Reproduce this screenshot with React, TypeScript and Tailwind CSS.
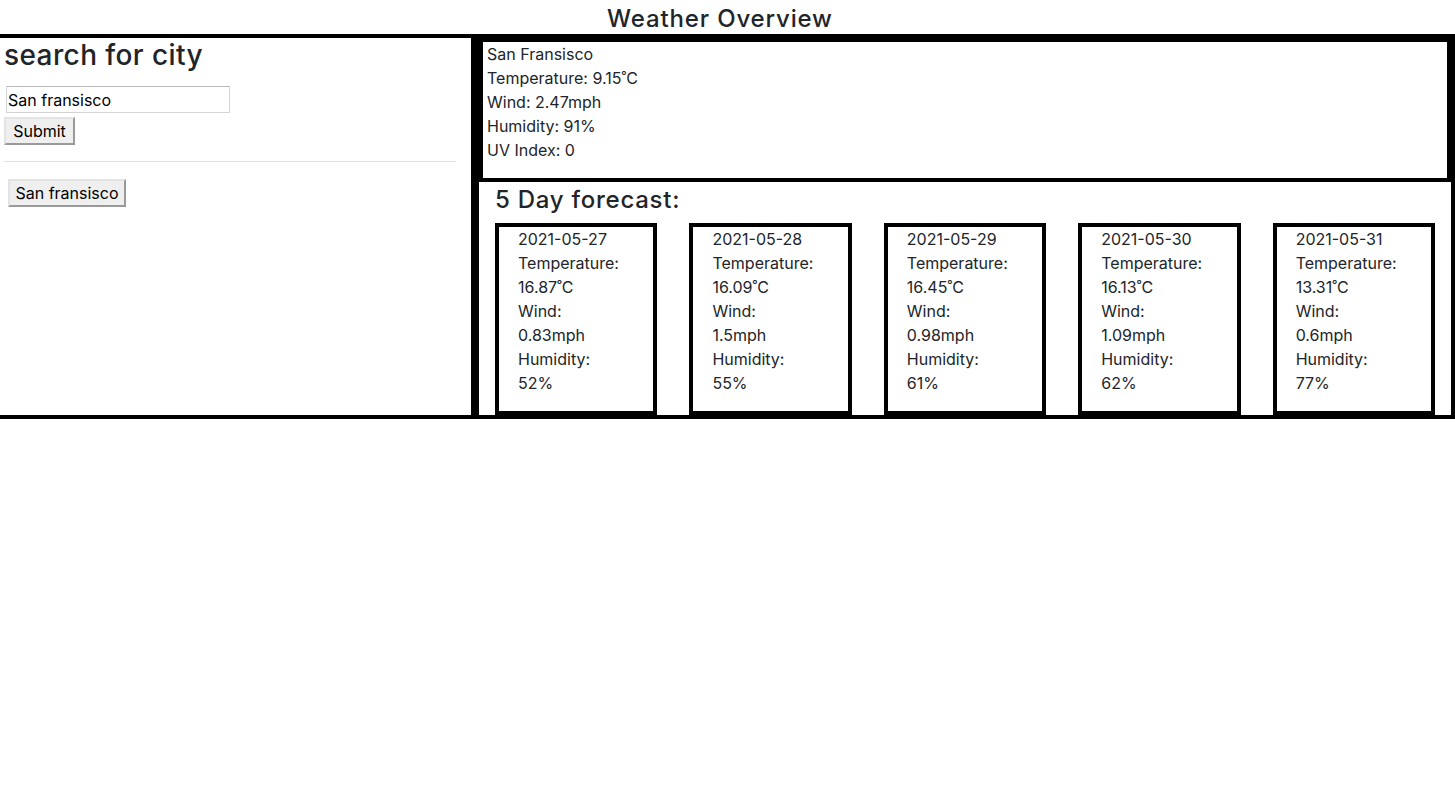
import React from "react";

const days = [
  { date: "2021-05-27", temp: "16.87", wind: "0.83", hum: "52" },
  { date: "2021-05-28", temp: "16.09", wind: "1.5", hum: "55" },
  { date: "2021-05-29", temp: "16.45", wind: "0.98", hum: "61" },
  { date: "2021-05-30", temp: "16.13", wind: "1.09", hum: "62" },
  { date: "2021-05-31", temp: "13.31", wind: "0.6", hum: "77" },
];

const btn =
  "block h-[28px] bg-[#efefef] border-2 border-t-[#e3e3e3] border-l-[#e3e3e3] border-b-[#9a9a9a] border-r-[#9a9a9a] text-[16px] leading-none text-black";

export default function App() {
  return (
    <div
      className="min-h-screen bg-white text-[#212529]"
      style={{ fontFamily: 'Inter, "Noto Sans", sans-serif' }}
    >
      <h4 className="h-[34px] overflow-hidden pr-[15px] text-center text-[24px] font-medium leading-[38px] tracking-[0.85px]">
        Weather Overview
      </h4>
      <div className="flex border-y-4 border-black">
        <aside className="w-[475px] shrink-0 border-r-4 border-black pl-1 pr-[15px]">
          <h3 className="text-[28px] font-medium leading-[34px] tracking-[0.4px]">
            search for city
          </h3>
          <form onSubmit={(e) => e.preventDefault()}>
            <input
              className="mt-[14px] ml-[2px] block h-[27px] w-[224px] border border-[#d4d4d4] border-t-[#b9b9b9] px-[1px] text-[16px] text-black outline-none"
              defaultValue="San fransisco"
            />
            <button type="button" className={`${btn} mt-[4px] w-[71px]`}>
              Submit
            </button>
          </form>
          <hr className="mt-[16px] border-0 border-t border-[#e2e2e2]" />
          <button type="button" className={`${btn} mt-[17px] ml-[4px] w-[118px]`}>
            San fransisco
          </button>
        </aside>
        <section className="flex-1 border-x-4 border-black">
          <div className="border-4 border-black pb-4 pl-1 text-[16px] leading-6">
            <p>San Fransisco</p>
            <p>Temperature: 9.15˚C</p>
            <p>Wind: 2.47mph</p>
            <p>Humidity: 91%</p>
            <p>UV Index: 0</p>
          </div>
          <div>
            <h4 className="mb-[5px] px-4 text-[24px] font-medium leading-[36px] tracking-[0.75px]">
              5 Day forecast:
            </h4>
            <div className="flex">
              {days.map((d) => (
                <div key={d.date} className="flex-1 px-4">
                  <div className="border-4 border-black pb-4 pl-[19px] pr-[10px] text-[16px] leading-6">
                    <p>{d.date}</p>
                    <p>Temperature:</p>
                    <p>{d.temp}˚C</p>
                    <p>Wind:</p>
                    <p>{d.wind}mph</p>
                    <p>Humidity:</p>
                    <p>{d.hum}%</p>
                  </div>
                </div>
              ))}
            </div>
          </div>
        </section>
      </div>
    </div>
  );
}
